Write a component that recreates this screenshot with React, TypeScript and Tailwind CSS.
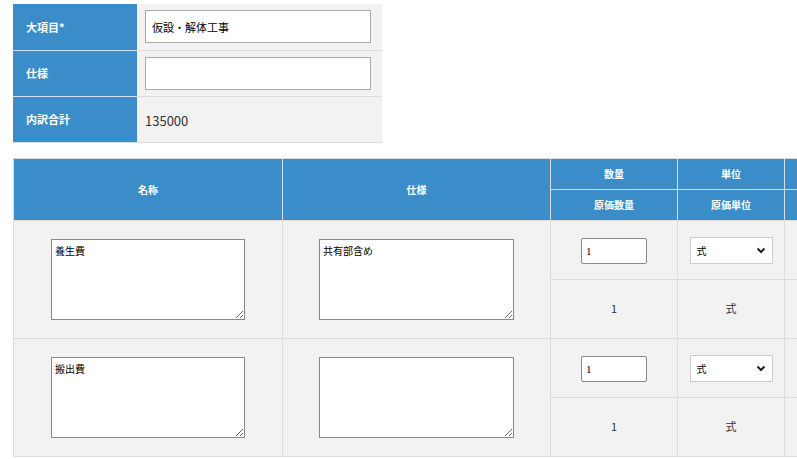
import React from "react";

const F = { fontFamily: '"Noto Sans CJK JP", "Noto Sans", sans-serif' };

function Row({ name, spec }: { name: string; spec: string }) {
  return (
    <>
      <tr className="h-[59px]">
        <td rowSpan={2} className="border border-[#dcdcdc] bg-[#f2f2f2] text-center align-middle">
          <textarea defaultValue={name} className="w-[194px] h-[81px] border border-[#888] bg-white text-[10px] p-[3px] resize-y align-middle" />
        </td>
        <td rowSpan={2} className="border border-[#dcdcdc] bg-[#f2f2f2] text-center align-middle">
          <textarea defaultValue={spec} className="w-[195px] h-[81px] border border-[#888] bg-white text-[10px] p-[3px] resize-y align-middle" />
        </td>
        <td className="border border-[#dcdcdc] bg-[#f2f2f2] text-center">
          <input defaultValue="1" className="w-[66px] h-[26px] border border-[#888] rounded-[2px] bg-white text-[11px] px-1" style={{ fontFamily: '"Liberation Serif", serif' }} />
        </td>
        <td className="border border-[#dcdcdc] bg-[#f2f2f2] text-center">
          <div className="inline-flex w-[83px] h-[27px] items-center justify-between border border-[#ccc] bg-white px-1.5 text-[10px]">
            <span>式</span>
            <svg width="10" height="7" viewBox="0 0 10 7"><path d="M1.5 1.5 L5 5 L8.5 1.5" stroke="#222" strokeWidth="2" fill="none" /></svg>
          </div>
        </td>
        <td className="border border-[#dcdcdc] bg-[#f2f2f2]" />
      </tr>
      <tr className="h-[59px]">
        <td className="border border-[#dcdcdc] bg-[#f2f2f2] text-center text-[11px] text-[#333]">1</td>
        <td className="border border-[#dcdcdc] bg-[#f2f2f2] text-center text-[11px] text-[#333]">式</td>
        <td className="border border-[#dcdcdc] bg-[#f2f2f2]" />
      </tr>
    </>
  );
}

export default function App() {
  const th = "border border-[#dcdcdc] bg-[#3a8dc8] text-white font-bold text-[10px] text-center";
  return (
    <div className="w-[797px] h-[459px] overflow-hidden bg-white" style={F}>
      <div className="h-[4px]" />
      <table className="ml-[13px] border-collapse w-[369px]">
        <tbody>
          {[
            ["大項目*", <input defaultValue="仮設・解体工事" className="w-[226px] h-[33px] border border-[#aaa] bg-white text-[11px] px-[6px]" />],
            ["仕様", <input className="w-[226px] h-[33px] border border-[#aaa] bg-white text-[11px] px-[6px]" />],
            ["内訳合計", <span className="text-[13px] text-[#333] pl-[0px]">135000</span>],
          ].map(([l, c], i) => (
            <tr key={i} className="h-[46px]">
              <td className="w-[124px] bg-[#3a8dc8] text-white font-bold text-[11px] pl-[13px] border-b border-[#cfe1ee]">{l}</td>
              <td className="bg-[#f2f2f2] pl-[8px] border-b border-[#dcdcdc]">{c}</td>
            </tr>
          ))}
        </tbody>
      </table>
      <table className="ml-[13px] mt-[15px] border-collapse w-[800px] table-fixed">
        <colgroup>
          <col className="w-[269px]" />
          <col className="w-[268px]" />
          <col className="w-[127px]" />
          <col className="w-[107px]" />
          <col className="w-[29px]" />
        </colgroup>
        <thead>
          <tr className="h-[31px]">
            <th rowSpan={2} className={th}>名称</th>
            <th rowSpan={2} className={th}>仕様</th>
            <th className={th}>数量</th>
            <th className={th}>単位</th>
            <th className={th} />
          </tr>
          <tr className="h-[31px]">
            <th className={th}>原価数量</th>
            <th className={th}>原価単位</th>
            <th className={th} />
          </tr>
        </thead>
        <tbody>
          <Row name="養生費" spec="共有部含め" />
          <Row name="搬出費" spec="" />
        </tbody>
      </table>
    </div>
  );
}
